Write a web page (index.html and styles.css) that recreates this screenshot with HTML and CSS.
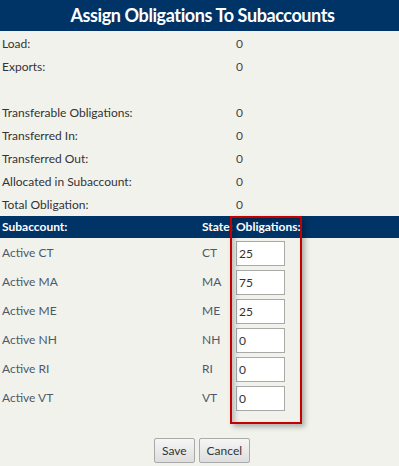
FILE: index.html
```html
<!DOCTYPE html>
<html lang="en">

    <head>

        <meta charset="UTF-8">
        <meta name="viewport" content="width=device-width, initial-scale=1.0">
        <title>Assign Obligations To Subaccounts</title>

        <link rel="stylesheet" href="styles.css">

    </head>

    <body>

        <main class="assign">

            <header class="assign-title">Assign Obligations To Subaccounts</header>

            <section class="totals">

                <div class="totals-label">Load:</div>
                <div class="totals-value">0</div>
                <div class="totals-label">Exports:</div>
                <div class="totals-value">0</div>
                <div class="totals-label"></div>
                <div class="totals-value"></div>
                <div class="totals-label">Transferable Obligations:</div>
                <div class="totals-value">0</div>
                <div class="totals-label">Transferred In:</div>
                <div class="totals-value">0</div>
                <div class="totals-label">Transferred Out:</div>
                <div class="totals-value">0</div>
                <div class="totals-label">Allocated in Subaccount:</div>
                <div class="totals-value">0</div>
                <div class="totals-label">Total Obligation:</div>
                <div class="totals-value">0</div>

            </section>

            <section class="subaccounts">

                <div class="head-band"></div>

                <div class="head-cell col-name">Subaccount:</div>
                <div class="head-cell col-state">State:</div>
                <div class="head-cell col-oblig">Obligations:</div>

                <div class="cell row-2 col-name">Active CT</div>
                <div class="cell row-2 col-state">CT</div>
                <div class="cell row-2 col-oblig"><input class="oblig-input" type="text" value="25"></div>

                <div class="cell row-3 col-name">Active MA</div>
                <div class="cell row-3 col-state">MA</div>
                <div class="cell row-3 col-oblig"><input class="oblig-input" type="text" value="75"></div>

                <div class="cell row-4 col-name">Active ME</div>
                <div class="cell row-4 col-state">ME</div>
                <div class="cell row-4 col-oblig"><input class="oblig-input" type="text" value="25"></div>

                <div class="cell row-5 col-name">Active NH</div>
                <div class="cell row-5 col-state">NH</div>
                <div class="cell row-5 col-oblig"><input class="oblig-input" type="text" value="0"></div>

                <div class="cell row-6 col-name">Active RI</div>
                <div class="cell row-6 col-state">RI</div>
                <div class="cell row-6 col-oblig"><input class="oblig-input" type="text" value="0"></div>

                <div class="cell row-7 col-name">Active VT</div>
                <div class="cell row-7 col-state">VT</div>
                <div class="cell row-7 col-oblig"><input class="oblig-input" type="text" value="0"></div>

                <div class="highlight"></div>

            </section>

            <footer class="actions">

                <button class="action-btn" type="button">Save</button>
                <button class="action-btn" type="button">Cancel</button>

            </footer>

        </main>

    </body>

</html>
```

FILE: styles.css
```css
* 
    {
        margin: 0;
        padding: 0;
        box-sizing: border-box;
    }

body 
    {
        font-family: 'Lato', 'Liberation Sans', sans-serif;
        font-size: 12px;
        color: #333;
        background-color: #f2f2ed;
    }

.assign-title 
    {
        height: 31px;
        background-color: #003366;
        color: #fff;
        font-size: 18px;
        font-weight: bold;
        letter-spacing: -0.4px;
        text-align: center;
        line-height: 31px;
        padding-left: 6px;
    }

.totals 
    {
        display: grid;
        grid-template-columns: 236px 1fr;
        grid-auto-rows: 23px;
        padding-top: 1px;
    }

.totals-label 
    {
        padding-left: 2px;
        line-height: 23px;
    }

.totals-value 
    {
        line-height: 23px;
        color: #444;
    }

.subaccounts 
    {
        display: grid;
        grid-template-columns: 200px 30px 72px 1fr;
        grid-template-rows: 22px repeat(6, 29px) 12px;
    }

.head-band 
    {
        grid-column: 1 / -1;
        grid-row: 1;
        background-color: #003366;
    }

.highlight 
    {
        grid-column: 3;
        grid-row: 1 / -1;
        border: 2px solid #c40000;
        box-shadow: 3px 3px 5px rgba(0, 0, 0, 0.28), inset 3px 3px 5px rgba(0, 0, 0, 0.22);
        pointer-events: none;
    }

.head-cell 
    {
        grid-row: 1;
        color: #fff;
        font-weight: bold;
        line-height: 22px;
        white-space: nowrap;
    }

.cell 
    {
        line-height: 29px;
        color: #4b5a6b;
    }

.row-2 { grid-row: 2; }
.row-3 { grid-row: 3; }
.row-4 { grid-row: 4; }
.row-5 { grid-row: 5; }
.row-6 { grid-row: 6; }
.row-7 { grid-row: 7; }

.col-name 
    {
        grid-column: 1;
        padding-left: 2px;
    }

.col-state 
    {
        grid-column: 2;
        padding-left: 2px;
    }

.col-oblig 
    {
        grid-column: 3;
        padding-left: 6px;
    }

.cell.col-oblig 
    {
        padding-top: 3px;
        line-height: normal;
    }

.oblig-input 
    {
        display: block;
        width: 49px;
        height: 25px;
        border: 1px solid #a9a9a9;
        background-color: #fff;
        font-family: inherit;
        font-size: 12px;
        color: #333;
        padding-left: 2px;
    }

.actions 
    {
        display: flex;
        justify-content: center;
        gap: 4px;
        padding-top: 14px;
        padding-left: 5px;
    }

.action-btn 
    {
        height: 25px;
        padding: 0 7px;
        border: 1px solid #aaa;
        border-radius: 2px;
        background: linear-gradient(#f6f6f6, #dedede);
        font-family: inherit;
        font-size: 12px;
        color: #333;
    }
```
